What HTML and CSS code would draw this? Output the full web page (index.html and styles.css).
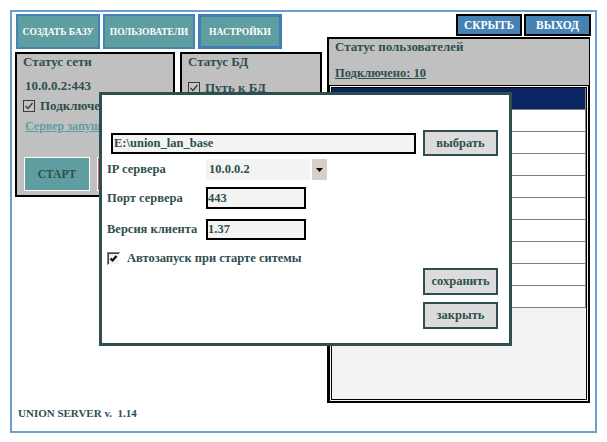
FILE: index.html
```
<!DOCTYPE html>
<html lang="ru">
<head>
<meta charset="utf-8">
<title>UNION SERVER</title>
<link rel="stylesheet" href="styles.css">
</head>
<body>
<div class="frame">
  <div class="main">
    <div class="leftcol">
      <div class="tabs">
        <button class="tab tab-create">СОЗДАТЬ БАЗУ</button>
        <button class="tab tab-users">ПОЛЬЗОВАТЕЛИ</button>
        <button class="tab tab-settings">НАСТРОЙКИ</button>
      </div>
      <div class="panels">
        <section class="panel net">
          <h3 class="ptitle">Статус сети</h3>
          <div class="addr">10.0.0.2:443</div>
          <div class="chk"><svg class="cb" width="12" height="12" viewBox="0 0 12 12"><rect x="0.5" y="0.5" width="11" height="11" fill="#c4c4c4" stroke="#3a3a3a"/><path d="M2.5 6 L5 8.5 L9.5 3" fill="none" stroke="#2f3f3f" stroke-width="1.4"/></svg><span>Подключено</span></div>
          <a class="plink" href="#">Сервер запущен</a>
          <div class="actions">
            <button class="start">СТАРТ</button>
            <button class="stop" aria-label="СТОП"></button>
          </div>
        </section>
        <section class="panel db">
          <h3 class="ptitle">Статус БД</h3>
          <div class="chk chk-db"><svg class="cb" width="12" height="12" viewBox="0 0 12 12"><rect x="0.5" y="0.5" width="11" height="11" fill="#c4c4c4" stroke="#3a3a3a"/><path d="M2.5 6 L5 8.5 L9.5 3" fill="none" stroke="#2f3f3f" stroke-width="1.4"/></svg><span>Путь к БД</span></div>
        </section>
      </div>
    </div>
    <div class="rightcol">
      <div class="topbtns">
        <button class="tbtn tbtn-hide">СКРЫТЬ</button>
        <button class="tbtn tbtn-exit">ВЫХОД</button>
      </div>
      <section class="users">
        <h3 class="utitle">Статус пользователей</h3>
        <a class="ulink" href="#">Подключено: 10</a>
        <div class="list">
          <div class="lhead"></div>
          <div class="lrow"></div>
          <div class="lrow"></div>
          <div class="lrow"></div>
          <div class="lrow"></div>
          <div class="lrow"></div>
          <div class="lrow"></div>
          <div class="lrow"></div>
          <div class="lrow"></div>
          <div class="lrow"></div>
        </div>
      </section>
    </div>
  </div>
  <footer class="footer">UNION SERVER v.&nbsp; 1.14</footer>
</div>

<div class="dialog">
  <div class="pathrow">
    <div class="path">E:\union_lan_base</div>
    <button class="btn">выбрать</button>
  </div>
  <div class="field f-ip">
    <span class="flabel">IP сервера</span>
    <div class="select"><span class="sval">10.0.0.2</span><span class="sarrow"><svg width="7" height="4" viewBox="0 0 7 4"><path d="M0 0 H7 L3.5 4 Z" fill="#000"/></svg></span></div>
  </div>
  <div class="field f-port">
    <span class="flabel">Порт сервера</span>
    <div class="input">443</div>
  </div>
  <div class="field f-ver">
    <span class="flabel">Версия клиента</span>
    <div class="input">1.37</div>
  </div>
  <div class="autorow">
    <svg class="dcb" width="13" height="13" viewBox="0 0 13 13"><rect x="0" y="0" width="13" height="13" fill="#808080"/><rect x="1" y="1" width="12" height="12" fill="#ffffff"/><rect x="1" y="1" width="11" height="11" fill="#404040"/><rect x="2" y="2" width="10" height="10" fill="#f0f0f0"/><path d="M3.5 6.5 L5.5 8.5 L9.5 4" fill="none" stroke="#000" stroke-width="2"/></svg>
    <span>Автозапуск при старте ситемы</span>
  </div>
  <div class="dactions">
    <button class="btn btn-tall">сохранить</button>
    <button class="btn btn-tall">закрыть</button>
  </div>
</div>
</body>
</html>
```
FILE: styles.css
```
html, body {
  margin: 0;
  padding: 0;
  background: #ffffff;
}
body {
  font-family: "Liberation Serif", "Times New Roman", serif;
  font-weight: bold;
  color: #2f4f4f;
}
button {
  font-family: "Liberation Serif", "Times New Roman", serif;
  font-weight: bold;
  padding: 0;
  cursor: pointer;
}
.frame {
  margin: 10px 0 0 10px;
  width: 587px;
  height: 423px;
  box-sizing: border-box;
  border: 2px solid #6c9ed3;
  padding: 2px 4px 0 3px;
  display: flex;
  flex-direction: column;
}
.main {
  display: flex;
  gap: 5px;
}
.leftcol {
  width: 307px;
}
.tabs {
  display: flex;
  gap: 3px;
  margin-left: 1px;
}
.tab {
  height: 35px;
  box-sizing: border-box;
  border: 2px solid #4682b4;
  background: #5f9ea0;
  color: #ffffff;
  font-size: 9.5px;
}
.tab-create { width: 84px; }
.tab-users { width: 92px; }
.tab-settings { width: 84px; border: 3px solid #3f7fb6; }

.panels {
  display: flex;
  gap: 5px;
  margin-top: 3px;
}
.panel {
  height: 145px;
  box-sizing: border-box;
  border: 2px solid #000;
  background: #c0c0c0;
  padding: 0 0 0 6px;
  overflow: hidden;
  white-space: nowrap;
}
.net { width: 160px; }
.db { width: 142px; }
.ptitle {
  margin: 0;
  font-size: 13px;
  line-height: 16px;
}
.addr {
  margin: 8px 0 0 2px;
  font-size: 13px;
  line-height: 16px;
}
.chk {
  display: flex;
  align-items: center;
  gap: 5px;
  margin-top: 4px;
  height: 16px;
  font-size: 13px;
}
.chk-db { margin-top: 10px; }
.cb { flex: none; }
.plink {
  display: block;
  margin: 4px 0 0 2px;
  font-size: 12px;
  line-height: 16px;
  color: #5f9ea0;
  text-decoration: underline;
}
.actions {
  display: flex;
  gap: 7px;
  margin: 23px 0 0 1px;
}
.start, .stop {
  width: 66px;
  height: 34px;
  border: 1px solid #ffffff;
  font-size: 11.5px;
  color: #2f4f4f;
}
.start { background: #5f9ea0; }
.stop { background: #cd5c5c; }

.rightcol {
  width: 263px;
  display: flex;
  flex-direction: column;
}
.topbtns {
  display: flex;
  justify-content: flex-end;
  gap: 2px;
  margin-right: -1px;
}
.tbtn {
  height: 22px;
  box-sizing: border-box;
  border: 2px solid #000;
  background: #4682b4;
  color: #ffffff;
  font-size: 11.5px;
}
.tbtn-hide { width: 66px; }
.tbtn-exit { width: 67px; }
.users {
  margin-top: 1px;
  height: 366px;
  box-sizing: border-box;
  border: 2px solid #000;
  border-right-width: 1px;
  border-bottom-width: 1px;
  background: #c0c0c0;
  display: flex;
  flex-direction: column;
}
.utitle {
  margin: 0;
  padding-left: 6px;
  font-size: 13px;
  line-height: 16px;
}
.ulink {
  margin: 10px 0 0 6px;
  font-size: 12.5px;
  line-height: 16px;
  color: #2f4f4f;
  text-decoration: underline;
  align-self: flex-start;
}
.list {
  flex: 1;
  margin-top: 4px;
  border: 3px double #000;
  background: #f3f3f3;
}
.lhead {
  height: 21px;
  background: #0b2463;
  border-right: 1px solid #808080;
  border-bottom: 1px solid #808080;
}
.lrow {
  height: 21px;
  background: #ffffff;
  border-right: 1px solid #808080;
  border-bottom: 1px solid #808080;
}
.footer {
  margin-top: auto;
  padding: 0 0 11px 3px;
  font-size: 11px;
  line-height: 14px;
}

/* Dialog overlay */
.dialog {
  position: absolute;
  left: 99px;
  top: 92px;
  width: 413px;
  height: 254px;
  box-sizing: border-box;
  border: 3px solid #2f4f4f;
  background: #ffffff;
  padding: 35px 11px 0 5px;
  font-size: 12.5px;
}
.pathrow {
  display: flex;
  align-items: center;
  gap: 7px;
  height: 26px;
}
.path {
  margin-left: 4px;
  width: 305px;
  height: 21px;
  box-sizing: border-box;
  border: 2px solid #000;
  background: #f3f3f3;
  padding-left: 1px;
  line-height: 17px;
  font-size: 12.5px;
}
.btn {
  width: 75px;
  height: 26px;
  box-sizing: border-box;
  border: 2px solid #2f4f4f;
  background: #dcdcdc;
  color: #2f4f4f;
  font-size: 12.5px;
}
.btn-tall { height: 27px; }
.field {
  display: flex;
  align-items: center;
}
.flabel {
  width: 99px;
  flex: none;
  white-space: nowrap;
}
.f-ip { margin-top: 3px; height: 21px; }
.f-port { margin-top: 7px; height: 22px; }
.f-ver { margin-top: 10px; height: 21px; }
.select {
  display: flex;
  gap: 2px;
  height: 21px;
}
.sval {
  width: 101px;
  background: #f3f3f3;
  padding-left: 3px;
  line-height: 21px;
}
.sarrow {
  width: 15px;
  background: #d4d0c8;
  display: flex;
  align-items: center;
  justify-content: center;
}
.input {
  width: 100px;
  height: 100%;
  box-sizing: border-box;
  border: 2px solid #000;
  background: #f3f3f3;
  display: flex;
  align-items: center;
}
.autorow {
  display: flex;
  align-items: center;
  gap: 7px;
  margin-top: 12px;
  height: 13px;
}
.dcb { flex: none; }
.dactions {
  display: flex;
  flex-direction: column;
  align-items: flex-end;
  gap: 7px;
  margin-top: 3px;
}
```
